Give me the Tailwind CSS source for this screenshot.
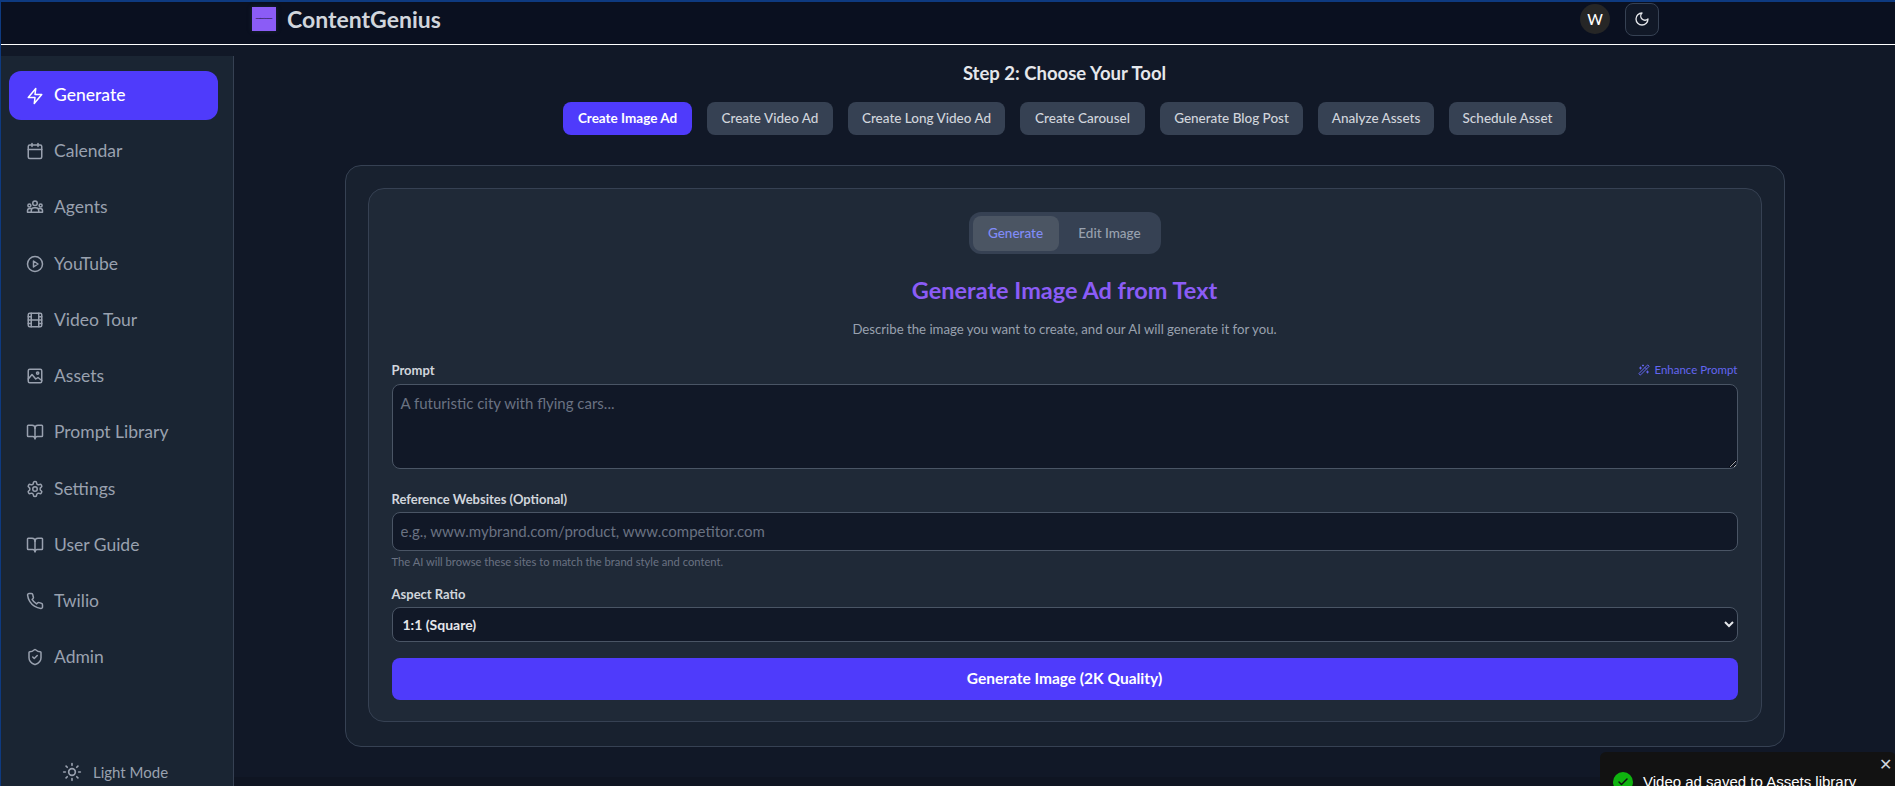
<!DOCTYPE html>
<html lang="en">
<head>
  <meta charset="UTF-8" />
  <meta name="viewport" content="width=device-width, initial-scale=1" />
  <title>ContentGenius</title>
  <script src="https://cdn.jsdelivr.net/npm/@tailwindcss/browser@4"></script>
</head>
<body class="h-screen overflow-hidden bg-[#111827] font-['Lato',sans-serif] text-gray-200">
  <div class="relative flex h-full flex-col border-t-2 border-l border-[#0e3a80]">
    <!-- top bar -->
    <header class="flex h-[43px] shrink-0 items-center justify-between border-b border-white bg-[#0a1020] pr-[236px] pb-[8px] pl-[251px]">
      <div class="flex items-center gap-[11px]">
        <div class="flex h-6 w-6 items-center justify-center overflow-hidden bg-[#8b5cf6] text-[2.5px] font-bold whitespace-nowrap text-black shadow-[0_0_4px_#1f2937]">ContentGenius</div>
        <span class="text-[23px] leading-8 font-bold text-gray-300">ContentGenius</span>
      </div>
      <div class="flex items-center gap-[15px]">
        <div class="flex h-[30px] w-[30px] items-center justify-center rounded-full bg-[#262626] text-[15px] font-medium text-white">W</div>
        <button class="flex h-[33px] w-[34px] items-center justify-center rounded-lg border border-gray-700 bg-[#111827] text-gray-200">
          <svg class="h-4 w-4" viewBox="0 0 24 24" fill="none" stroke="currentColor" stroke-width="2" stroke-linecap="round" stroke-linejoin="round"><path d="M12 3a6 6 0 0 0 9 9 9 9 0 1 1-9-9Z"/></svg>
        </button>
      </div>
    </header>

    <div class="flex min-h-0 flex-1">
      <!-- sidebar -->
      <aside class="mt-[11px] flex w-[233px] shrink-0 flex-col border-r border-gray-700 bg-[#1a2533] px-2 pt-[15px] text-gray-400">
        <a class="flex h-[49px] w-[209px] items-center gap-[10px] rounded-xl bg-[#4f3bfb] pl-[17px] text-[17.5px] font-medium text-white">
          <svg class="h-[18px] w-[18px]" viewBox="0 0 24 24" fill="none" stroke="currentColor" stroke-width="2" stroke-linecap="round" stroke-linejoin="round"><path d="M13 2 3 14h9l-1 8 10-12h-9l1-8z"/></svg>
          Generate
        </a>
        <nav class="mt-[3px] flex flex-col text-[17.5px]">
          <a class="flex h-[56.25px] items-center gap-[10px] pl-[17px]">
            <svg class="h-[18px] w-[18px]" viewBox="0 0 24 24" fill="none" stroke="currentColor" stroke-width="2" stroke-linecap="round" stroke-linejoin="round"><path d="M8 2v4"/><path d="M16 2v4"/><rect x="3" y="4" width="18" height="18" rx="2"/><path d="M3 10h18"/></svg>
            Calendar
          </a>
          <a class="flex h-[56.25px] items-center gap-[10px] pl-[17px]">
            <svg class="h-[18px] w-[18px]" viewBox="0 0 24 24" fill="none" stroke="currentColor" stroke-width="2" stroke-linecap="round" stroke-linejoin="round"><circle cx="12" cy="7" r="3"/><circle cx="4.5" cy="10" r="2"/><circle cx="19.5" cy="10" r="2"/><path d="M7 19v-2a4 4 0 0 1 4-4h2a4 4 0 0 1 4 4v2z"/><path d="M7 19H2v-2a3 3 0 0 1 3-3h2"/><path d="M17 19h5v-2a3 3 0 0 0-3-3h-2"/></svg>
            Agents
          </a>
          <a class="flex h-[56.25px] items-center gap-[10px] pl-[17px]">
            <svg class="h-[18px] w-[18px]" viewBox="0 0 24 24" fill="none" stroke="currentColor" stroke-width="2" stroke-linecap="round" stroke-linejoin="round"><circle cx="12" cy="12" r="10"/><path d="m10 8 6 4-6 4z"/></svg>
            YouTube
          </a>
          <a class="flex h-[56.25px] items-center gap-[10px] pl-[17px]">
            <svg class="h-[18px] w-[18px]" viewBox="0 0 24 24" fill="none" stroke="currentColor" stroke-width="2" stroke-linecap="round" stroke-linejoin="round"><rect x="3" y="3" width="18" height="18" rx="2"/><path d="M7 3v18"/><path d="M17 3v18"/><path d="M3 12h18"/><path d="M3 7.5h4"/><path d="M3 16.5h4"/><path d="M17 7.5h4"/><path d="M17 16.5h4"/></svg>
            Video Tour
          </a>
          <a class="flex h-[56.25px] items-center gap-[10px] pl-[17px]">
            <svg class="h-[18px] w-[18px]" viewBox="0 0 24 24" fill="none" stroke="currentColor" stroke-width="2" stroke-linecap="round" stroke-linejoin="round"><rect x="3" y="3" width="18" height="18" rx="2"/><circle cx="15.5" cy="8" r="1.5"/><path d="m3 16 5-6 5 6 3-2 5 4"/></svg>
            Assets
          </a>
          <a class="flex h-[56.25px] items-center gap-[10px] pl-[17px]">
            <svg class="h-[18px] w-[18px]" viewBox="0 0 24 24" fill="none" stroke="currentColor" stroke-width="2" stroke-linecap="round" stroke-linejoin="round"><path d="M12 7v14"/><path d="M3 18a1 1 0 0 1-1-1V4a1 1 0 0 1 1-1h5a4 4 0 0 1 4 4 4 4 0 0 1 4-4h5a1 1 0 0 1 1 1v13a1 1 0 0 1-1 1h-6a3 3 0 0 0-3 3 3 3 0 0 0-3-3z"/></svg>
            Prompt Library
          </a>
          <a class="flex h-[56.25px] items-center gap-[10px] pl-[17px]">
            <svg class="h-[18px] w-[18px]" viewBox="0 0 24 24" fill="none" stroke="currentColor" stroke-width="2" stroke-linecap="round" stroke-linejoin="round"><path d="M12.22 2h-.44a2 2 0 0 0-2 2v.18a2 2 0 0 1-1 1.73l-.43.25a2 2 0 0 1-2 0l-.15-.08a2 2 0 0 0-2.73.73l-.22.38a2 2 0 0 0 .73 2.73l.15.1a2 2 0 0 1 1 1.72v.51a2 2 0 0 1-1 1.74l-.15.09a2 2 0 0 0-.73 2.73l.22.38a2 2 0 0 0 2.73.73l.15-.08a2 2 0 0 1 2 0l.43.25a2 2 0 0 1 1 1.73V20a2 2 0 0 0 2 2h.44a2 2 0 0 0 2-2v-.18a2 2 0 0 1 1-1.73l.43-.25a2 2 0 0 1 2 0l.15.08a2 2 0 0 0 2.73-.73l.22-.39a2 2 0 0 0-.73-2.73l-.15-.08a2 2 0 0 1-1-1.74v-.5a2 2 0 0 1 1-1.74l.15-.09a2 2 0 0 0 .73-2.73l-.22-.38a2 2 0 0 0-2.73-.73l-.15.08a2 2 0 0 1-2 0l-.43-.25a2 2 0 0 1-1-1.73V4a2 2 0 0 0-2-2z"/><circle cx="12" cy="12" r="3"/></svg>
            Settings
          </a>
          <a class="flex h-[56.25px] items-center gap-[10px] pl-[17px]">
            <svg class="h-[18px] w-[18px]" viewBox="0 0 24 24" fill="none" stroke="currentColor" stroke-width="2" stroke-linecap="round" stroke-linejoin="round"><path d="M12 7v14"/><path d="M3 18a1 1 0 0 1-1-1V4a1 1 0 0 1 1-1h5a4 4 0 0 1 4 4 4 4 0 0 1 4-4h5a1 1 0 0 1 1 1v13a1 1 0 0 1-1 1h-6a3 3 0 0 0-3 3 3 3 0 0 0-3-3z"/></svg>
            User Guide
          </a>
          <a class="flex h-[56.25px] items-center gap-[10px] pl-[17px]">
            <svg class="h-[18px] w-[18px]" viewBox="0 0 24 24" fill="none" stroke="currentColor" stroke-width="2" stroke-linecap="round" stroke-linejoin="round"><path d="M22 16.92v3a2 2 0 0 1-2.18 2 19.79 19.79 0 0 1-8.63-3.07 19.5 19.5 0 0 1-6-6 19.79 19.79 0 0 1-3.07-8.67A2 2 0 0 1 4.11 2h3a2 2 0 0 1 2 1.72 12.84 12.84 0 0 0 .7 2.81 2 2 0 0 1-.45 2.11L8.09 9.91a16 16 0 0 0 6 6l1.27-1.27a2 2 0 0 1 2.11-.45 12.84 12.84 0 0 0 2.81.7A2 2 0 0 1 22 16.92z"/></svg>
            Twilio
          </a>
          <a class="flex h-[56.25px] items-center gap-[10px] pl-[17px]">
            <svg class="h-[18px] w-[18px]" viewBox="0 0 24 24" fill="none" stroke="currentColor" stroke-width="2" stroke-linecap="round" stroke-linejoin="round"><path d="M20 13c0 5-3.5 7.5-7.66 8.95a1 1 0 0 1-.67-.01C7.5 20.5 4 18 4 13V6a1 1 0 0 1 1-1c2 0 4.5-1.2 6.24-2.72a1.17 1.17 0 0 1 1.52 0C14.51 3.81 17 5 19 5a1 1 0 0 1 1 1z"/><path d="m9 12 2 2 4-4"/></svg>
            Admin
          </a>
        </nav>
        <div class="mt-auto flex items-center gap-[11px] pb-[3px] pl-[53px] text-[15px]">
          <svg class="h-5 w-5" viewBox="0 0 24 24" fill="none" stroke="currentColor" stroke-width="2" stroke-linecap="round" stroke-linejoin="round"><circle cx="12" cy="12" r="4"/><path d="M12 2v2"/><path d="M12 20v2"/><path d="m4.9 4.9 1.4 1.4"/><path d="m17.7 17.7 1.4 1.4"/><path d="M2 12h2"/><path d="M20 12h2"/><path d="m6.3 17.7-1.4 1.4"/><path d="m19.1 4.9-1.4 1.4"/></svg>
          Light Mode
        </div>
      </aside>

      <!-- main -->
      <main class="flex min-w-0 flex-1 flex-col">
        <div class="flex min-h-0 flex-1 flex-col items-center pt-[16px]">
          <h2 class="text-[18.5px] leading-6 font-bold text-gray-200">Step 2: Choose Your Tool</h2>
          <div class="mt-[17px] flex gap-[15px] text-[13.5px] font-medium text-gray-300">
            <button class="h-[33px] w-[129px] rounded-lg bg-[#4f3bfb] font-bold text-white">Create Image Ad</button>
            <button class="h-[33px] w-[126px] rounded-lg bg-gray-700">Create Video Ad</button>
            <button class="h-[33px] w-[157px] rounded-lg bg-gray-700">Create Long Video Ad</button>
            <button class="h-[33px] w-[125px] rounded-lg bg-gray-700">Create Carousel</button>
            <button class="h-[33px] w-[143px] rounded-lg bg-gray-700">Generate Blog Post</button>
            <button class="h-[33px] w-[116px] rounded-lg bg-gray-700">Analyze Assets</button>
            <button class="h-[33px] w-[117px] rounded-lg bg-gray-700">Schedule Asset</button>
          </div>

          <section class="mt-[30px] w-[1440px] rounded-2xl border border-gray-700 bg-[#18212f] px-[22px] pt-[22px] pb-[24px]">
            <div class="rounded-2xl border border-gray-700 bg-[#1f2937] px-[23px] pt-[23px] pb-[21px]">
              <div class="flex justify-center">
                <div class="flex h-[42px] w-[192px] items-center gap-[4px] rounded-xl bg-gray-700 px-1 text-[13.5px] font-medium">
                  <button class="h-[35px] w-[86px] rounded-lg bg-[#4b5563] text-[#818cf8]">Generate</button>
                  <button class="h-[35px] flex-1 text-gray-400">Edit Image</button>
                </div>
              </div>
              <h1 class="mt-[20px] text-center text-[23.5px] leading-8 font-bold text-[#8b5cf6]">Generate Image Ad from Text</h1>
              <p class="mt-[13px] text-center text-[13.2px] leading-5 text-gray-400">Describe the image you want to create, and our AI will generate it for you.</p>

              <div class="mt-[21px] flex items-center justify-between">
                <label class="text-[13px] leading-5 font-bold text-gray-300">Prompt</label>
                <button class="flex items-center gap-1 text-[11.5px] text-[#6366f1]">
                  <svg class="h-3 w-3" viewBox="0 0 24 24" fill="none" stroke="currentColor" stroke-width="2" stroke-linecap="round" stroke-linejoin="round"><path d="m21.64 3.64-1.28-1.28a1.21 1.21 0 0 0-1.72 0L2.36 18.64a1.21 1.21 0 0 0 0 1.72l1.28 1.28a1.2 1.2 0 0 0 1.72 0L21.64 5.36a1.2 1.2 0 0 0 0-1.72"/><path d="m14 7 3 3"/><path d="M5 6v4"/><path d="M19 14v4"/><path d="M10 2v2"/><path d="M7 8H3"/><path d="M21 16h-4"/><path d="M11 3H9"/></svg>
                  Enhance Prompt
                </button>
              </div>
              <textarea rows="3" placeholder="A futuristic city with flying cars..." class="mt-[4px] block h-[85px] w-full rounded-lg border border-gray-600 bg-[#111827] px-2 pt-[7px] pb-2 text-[15px] text-gray-200 placeholder:text-gray-500 [color-scheme:dark]"></textarea>

              <label class="mt-[20px] block text-[13px] leading-5 font-bold text-gray-300">Reference Websites (Optional)</label>
              <input type="text" placeholder="e.g., www.mybrand.com/product, www.competitor.com" class="mt-[3px] block h-[39px] w-full rounded-lg border border-gray-600 bg-[#111827] px-2 pb-[2px] text-[15px] text-gray-200 placeholder:text-gray-500" />
              <p class="mt-[3px] text-[11.2px] leading-4 text-gray-500">The AI will browse these sites to match the brand style and content.</p>

              <label class="mt-[14px] block text-[13px] leading-5 font-bold text-gray-300">Aspect Ratio</label>
              <select class="mt-[3px] block h-[35px] w-full rounded-lg border border-gray-600 bg-[#111827] px-[6px] text-sm font-bold text-gray-200 [color-scheme:dark]">
                <option>1:1 (Square)</option>
              </select>
              <button class="mt-[16px] h-[42px] w-full rounded-lg bg-[#4f3bfb] text-[15.5px] font-bold text-white">Generate Image (2K Quality)</button>
            </div>
          </section>
        </div>
        <div class="h-[9px] shrink-0 bg-[#0f1522]"></div>
      </main>
    </div>

    <!-- toast, cut off by the window edge -->
    <div class="absolute top-[750px] left-[1599px] h-[60px] w-[296px] rounded-md bg-[#121212] font-['Liberation_Sans',sans-serif] text-white">
      <span class="absolute top-[5px] right-[4px] text-base leading-4 text-gray-300">✕</span>
      <div class="flex items-center gap-[10px] pt-[20px] pl-[13px]">
        <span class="flex h-5 w-5 items-center justify-center rounded-full bg-[#0fb30f]">
          <svg class="h-3 w-3" viewBox="0 0 24 24" fill="none" stroke="#111" stroke-width="3" stroke-linecap="round" stroke-linejoin="round"><path d="M20 6 9 17l-5-5"/></svg>
        </span>
        <span class="text-[15px] leading-5">Video ad saved to Assets library</span>
      </div>
    </div>
  </div>
</body>
</html>
